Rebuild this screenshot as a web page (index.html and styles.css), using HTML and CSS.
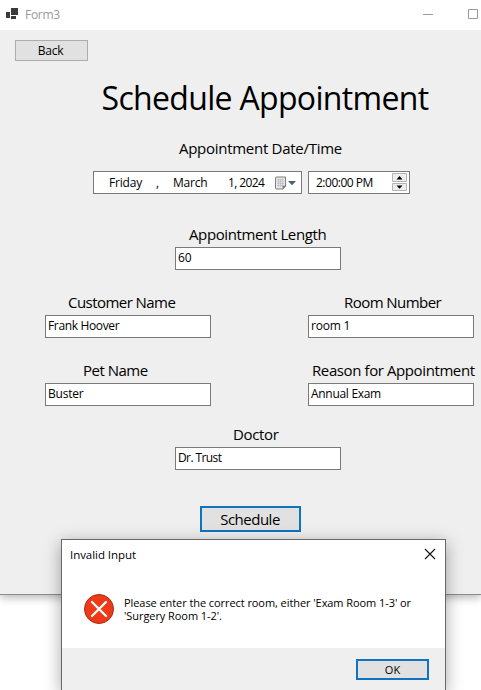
FILE: index.html
```html
<!DOCTYPE html>
<html lang="en">
<head>
<meta charset="utf-8">
<title>Form3</title>
<link rel="stylesheet" href="styles.css">
</head>
<body>
<main class="window">
  <header class="titlebar">
    <svg class="app-icon" width="14" height="13" viewBox="0 0 14 13"><path fill="#3a3a3c" d="M0 5h4v6H0zM5 1h7v7H5zM5 9h5v3H5z"/></svg>
    <span class="window-title">Form3</span>
    <svg class="controls" width="58" height="12" viewBox="0 0 58 12" fill="none" stroke="#999"><path d="M0 5.500h10M45.500 .5h9v9h-9z"/></svg>
  </header>
  <form class="form">
    <button type="button" class="button back">Back</button>
    <h1 class="heading"><span>Schedule Appointment</span></h1>
    <section class="group datetime">
      <span class="label l-date">Appointment Date/Time</span>
      <div class="pickers">
        <div class="box date">
          <span class="day">Friday</span><span class="comma">,</span><span class="month">March</span><span class="year">1, 2024</span>
          <svg class="calendar" width="22" height="14" viewBox="0 0 22 14"><path d="M1.500 1h9v9l-2.500 3h-6.500a1 1 0 0 1-1-1v-10a1 1 0 0 1 1-1z" fill="#e9e7e7" stroke="#85797a"/><path d="M2 3.500h7M2 5.500h7M2 7.500h7M2 9.500h6M3.500 3v8M5.500 3v8M7.500 3v8" stroke="#b4bdc9" stroke-width=".7"/><path d="M8 12.500v-2.500h2.500z" fill="#777" stroke="#777" stroke-width=".6"/><path d="M13 5h8l-4 4.200z" fill="#4a6078"/></svg>
        </div>
        <div class="box time">
          <span class="clock">2:00:00 PM</span>
          <svg class="spinner" width="15" height="19" viewBox="0 0 15 19"><path d="M.5.500h14v8H.5zM.5 10.500h14v7H.5z" fill="#eee" stroke="#b5b5b5"/><path d="M4.500 6.500l3-3.500 3 3.500zM4.500 12.500h6l-3 3.300z" fill="#000"/></svg>
        </div>
      </div>
    </section>
    <section class="group length">
      <span class="label l-length">Appointment Length</span>
      <div class="box field"><span>60</span></div>
    </section>
    <div class="pair">
      <section class="group">
        <span class="label l-customer">Customer Name</span>
        <div class="box field"><span class="v-customer">Frank Hoover</span></div>
      </section>
      <section class="group">
        <span class="label l-room">Room Number</span>
        <div class="box field"><span>room 1</span></div>
      </section>
    </div>
    <div class="pair">
      <section class="group">
        <span class="label l-pet">Pet Name</span>
        <div class="box field"><span>Buster</span></div>
      </section>
      <section class="group">
        <span class="label l-reason">Reason for Appointment</span>
        <div class="box field"><span class="v-reason">Annual Exam</span></div>
      </section>
    </div>
    <section class="group doctor">
      <span class="label l-doctor">Doctor</span>
      <div class="box field"><span class="v-doctor">Dr. Trust</span></div>
    </section>
    <button type="button" class="button schedule">Schedule</button>
  </form>
</main>
<div class="dialog" role="alertdialog">
  <div class="dialog-head">
    <span class="dialog-title">Invalid Input</span>
    <svg class="close" width="12" height="12" viewBox="0 0 12 12" stroke="#111" stroke-width="1.100"><path d="M1 1l10 10M11 1L1 11"/></svg>
  </div>
  <div class="dialog-body">
    <svg width="30" height="30" viewBox="0 0 30 30"><circle cx="15" cy="15" r="14.500" fill="#ee3a17" stroke="#a52a1c"/><path d="M8 8l14 14M22 8L8 22" stroke="#fff" stroke-width="2.300" stroke-linecap="round"/></svg>
    <p class="message">Please enter the correct room, either 'Exam Room 1-3' or<br>'Surgery Room 1-2'.</p>
  </div>
  <div class="dialog-foot"><button type="button" class="button ok">OK</button></div>
</div>
</body>
</html>
```
FILE: styles.css
```css
* { box-sizing: border-box; }
body {
  margin: 0;
  height: 690px;
  overflow: hidden;
  background: #fff;
  color: #000;
  font: 12px/16px "Open Sans", "Noto Sans", sans-serif;
}
.window {
  height: 595px;
  background: #efefef;
  border-bottom: 1px solid #8c8c8c;
  box-shadow: 0 2px 9px rgba(0, 0, 0, .32);
}
.titlebar {
  display: flex;
  align-items: center;
  height: 30px;
  padding-left: 6px;
  background: #fff;
  color: #999;
}
.app-icon { margin-bottom: 4px; }
.window-title { margin-left: 5px; letter-spacing: -.3px; }
.controls { margin-left: auto; margin-bottom: 1px; }
.form { display: flex; flex-direction: column; padding-top: 10px; }
.button {
  padding: 0;
  border: 1px solid #adadad;
  border-radius: 0;
  background: #e1e1e1;
  color: #000;
  font: inherit;
}
.back { width: 73px; height: 21px; margin-left: 15px; padding-right: 2px; line-height: 18px; letter-spacing: -.2px; }
.heading {
  width: 326px;
  margin: 15px 0 0 102px;
  display: flex;
  justify-content: center;
  font-size: 32px;
  line-height: 44px;
  font-weight: 400;
  white-space: nowrap;
  letter-spacing: -.68px;
}
.group { width: 166px; display: flex; flex-direction: column; align-items: flex-start; }
.label { font-size: 15px; line-height: 20px; height: 23px; white-space: nowrap; letter-spacing: -.35px; }
.l-length { margin-left: 14px; letter-spacing: -.38px; }
.l-customer { margin-left: 23px; letter-spacing: -.55px; }
.l-room { margin-left: 36px; letter-spacing: -.55px; }
.l-pet { margin-left: 38px; letter-spacing: -.5px; }
.l-reason { margin-left: 4px; letter-spacing: -.4px; }
.l-doctor { margin-left: 58px; }
.box { display: flex; align-items: center; height: 23px; border: 1px solid #7a7a7a; background: #fff; white-space: nowrap; letter-spacing: -.2px; }
.field { width: 166px; padding: 0 0 2px 2px; }
.v-customer { letter-spacing: -.35px; }
.v-reason { letter-spacing: -.3px; }
.v-doctor { letter-spacing: -.6px; }
.datetime { width: 317px; margin: 18px 0 0 93px; }
.l-date { height: 33px; margin-left: 86px; letter-spacing: -.28px; }
.pickers { display: flex; gap: 6px; }
.date { width: 209px; padding-left: 15px; }
.day { width: 47px; }
.comma { width: 17px; }
.month { width: 55px; }
.year { width: 47px; letter-spacing: -.6px; }
.time { width: 102px; padding-left: 7px; }
.clock { width: 76px; letter-spacing: -.5px; }
.length, .doctor { margin-left: 175px; }
.length { margin-top: 30px; }
.pair { display: flex; gap: 97px; margin: 22px 0 0 45px; }
.doctor { margin-top: 18px; }
.schedule { width: 101px; height: 26px; margin: 36px 0 0 200px; border: 2px solid #0f73bf; font-size: 15px; line-height: 21px; letter-spacing: -.5px; padding-right: 1px; }
.dialog {
  position: absolute;
  left: 61px;
  top: 539px;
  width: 385px;
  height: 151px;
  border: 1px solid #686868;
  border-bottom: 0;
  background: #fff;
  box-shadow: 0 4px 16px rgba(0, 0, 0, .35);
  font-size: 11px;
}
.dialog-head { display: flex; justify-content: space-between; align-items: center; height: 29px; padding: 0 9px 0 8px; }
.dialog-title { font-size: 11.5px; letter-spacing: -.05px; }
.close { margin-bottom: 2px; }
.dialog-body { display: flex; align-items: center; gap: 10px; height: 79px; padding-left: 22px; }
.message { margin: 1px 0 0; line-height: 13px; white-space: nowrap; letter-spacing: -.07px; }
.dialog-foot { display: flex; justify-content: flex-end; height: 42px; padding: 11px 16px 0 0; background: #efefef; }
.ok { width: 73px; height: 21px; border: 2px solid #0f73bf; line-height: 17px; }
```
